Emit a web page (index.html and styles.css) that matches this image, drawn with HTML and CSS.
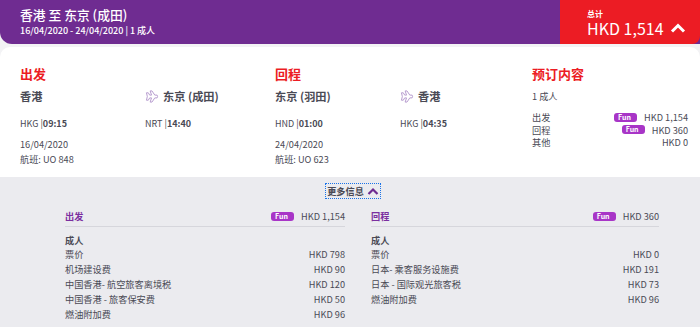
FILE: index.html
```html
<!DOCTYPE html>
<html lang="zh-CN">
  <head>
    <meta charset="UTF-8" />
    <meta name="viewport" content="width=device-width, initial-scale=1.0" />
    <title>预订内容</title>
    <link rel="stylesheet" href="styles.css">
  </head>

  <body>
    <div class="trip-header">
      <div class="trip-title">
        <h1>香港 至 东京 (成田)</h1>
        <div class="trip-dates">16/04/2020 - 24/04/2020 | 1 成人</div>
      </div>
      <div class="trip-total">
        <div class="total-label">总计</div>
        <div class="total-amount">
          HKD 1,514
          <svg class="chevron" width="16" height="12" viewBox="0 0 16 12">
            <path d="M2 9.5 L8 3.5 L14 9.5" fill="none" stroke="#fff" stroke-width="3" />
          </svg>
        </div>
      </div>
    </div>

    <div class="summary-card">
      <div class="leg">
        <h2>出发</h2>
        <div class="leg-grid">
          <div class="city">香港</div>
          <div class="city">
            <svg class="plane" width="14" height="13" viewBox="0 0 15 14">
              <path d="M1.5 3 L3.5 3 L5 5.5 L7 5.5 L5.5 1 L7.5 1 L10.5 5.5 L13 5.5 Q14 7 13 8.5 L10.5 8.5 L7.5 13 L5.5 13 L7 8.5 L5 8.5 L3.5 11 L1.5 11 L2.5 7 Z" fill="none" stroke="#b296cc" stroke-width="1" stroke-linejoin="round" />
            </svg>
            东京 (成田)
          </div>
          <div class="time">HKG |<b>09:15</b></div>
          <div class="time">NRT |<b>14:40</b></div>
        </div>
        <div class="flight-info">16/04/2020<br>航班: UO 848</div>
      </div>

      <div class="leg">
        <h2>回程</h2>
        <div class="leg-grid">
          <div class="city">东京 (羽田)</div>
          <div class="city">
            <svg class="plane" width="14" height="13" viewBox="0 0 15 14">
              <path d="M1.5 3 L3.5 3 L5 5.5 L7 5.5 L5.5 1 L7.5 1 L10.5 5.5 L13 5.5 Q14 7 13 8.5 L10.5 8.5 L7.5 13 L5.5 13 L7 8.5 L5 8.5 L3.5 11 L1.5 11 L2.5 7 Z" fill="none" stroke="#b296cc" stroke-width="1" stroke-linejoin="round" />
            </svg>
            香港
          </div>
          <div class="time">HND |<b>01:00</b></div>
          <div class="time">HKG |<b>04:35</b></div>
        </div>
        <div class="flight-info">24/04/2020<br>航班: UO 623</div>
      </div>

      <div class="booking">
        <h2>预订内容</h2>
        <div class="pax">1 成人</div>
        <div class="booking-rows">
          <div class="booking-row">
            <span>出发</span>
            <span class="price"><span class="fun">Fun</span>HKD 1,154</span>
          </div>
          <div class="booking-row">
            <span>回程</span>
            <span class="price"><span class="fun">Fun</span>HKD 360</span>
          </div>
          <div class="booking-row">
            <span>其他</span>
            <span class="price">HKD 0</span>
          </div>
        </div>
      </div>
    </div>

    <div class="details">
      <div class="more-toggle">
        <span class="more-link">更多信息
          <svg width="12" height="9" viewBox="0 0 12 9">
            <path d="M1.5 7 L6 2.5 L10.5 7" fill="none" stroke="#6f2c91" stroke-width="2.2" />
          </svg>
        </span>
      </div>

      <div class="breakdown">
        <div class="panel">
          <div class="panel-head">
            <span>出发</span>
            <span class="price"><span class="fun">Fun</span>HKD 1,154</span>
          </div>
          <div class="panel-sub">成人</div>
          <div class="fee"><span>票价</span><span>HKD 798</span></div>
          <div class="fee"><span>机场建设费</span><span>HKD 90</span></div>
          <div class="fee"><span>中国香港- 航空旅客离境税</span><span>HKD 120</span></div>
          <div class="fee"><span>中国香港 - 旅客保安费</span><span>HKD 50</span></div>
          <div class="fee"><span>燃油附加费</span><span>HKD 96</span></div>
        </div>

        <div class="panel">
          <div class="panel-head">
            <span>回程</span>
            <span class="price"><span class="fun">Fun</span>HKD 360</span>
          </div>
          <div class="panel-sub">成人</div>
          <div class="fee"><span>票价</span><span>HKD 0</span></div>
          <div class="fee"><span>日本- 乘客服务设施费</span><span>HKD 191</span></div>
          <div class="fee"><span>日本 - 国际观光旅客税</span><span>HKD 73</span></div>
          <div class="fee"><span>燃油附加费</span><span>HKD 96</span></div>
        </div>
      </div>
    </div>
  </body>
</html>
```

FILE: styles.css
```css
body {
  margin: 0;
  padding: 0;
  font-family: "Noto Sans CJK SC", "Noto Sans", sans-serif;
  color: #4a4a55;
  background: #f3f3f5;
  width: 700px;
  height: 327px;
  overflow: hidden;
}

.trip-header {
  display: flex;
  height: 44px;
  background: #6f2c91;
  border-bottom-left-radius: 12px;
  color: #fff;
}

.trip-title {
  flex: 1;
  padding: 6px 0 0 20px;
}

.trip-title h1 {
  margin: 0;
  font-size: 12.8px;
  font-weight: 500;
  line-height: 17px;
}

.trip-dates {
  font-size: 9px;
  font-weight: 500;
  line-height: 15px;
}

.trip-total {
  width: 113px;
  background: #ec1c24;
  border-bottom-right-radius: 8px;
  padding: 9px 0 0 27px;
}

.total-label {
  font-size: 8px;
  font-weight: 700;
  line-height: 10px;
}

.total-amount {
  display: flex;
  align-items: center;
  gap: 6px;
  font-size: 16px;
  line-height: 18px;
}

.summary-card {
  display: grid;
  grid-template-columns: 255px 257px 1fr;
  margin-top: 3px;
  height: 130px;
  box-sizing: border-box;
  padding: 18px 12px 0 20px;
  background: #fff;
  border-radius: 10px 10px 0 0;
}

.summary-card h2 {
  margin: 0;
  font-size: 13px;
  font-weight: 700;
  line-height: 18px;
  color: #ec1c24;
}

.leg-grid {
  display: grid;
  grid-template-columns: 125px 1fr;
  row-gap: 12px;
  margin-top: 4px;
}

.city {
  display: flex;
  align-items: center;
  gap: 4px;
  font-size: 11.2px;
  font-weight: 700;
  line-height: 18px;
  color: #4a4a55;
}

.time {
  font-size: 9px;
  line-height: 13px;
}

.time b {
  font-weight: 700;
}

.flight-info {
  margin-top: 7px;
  font-size: 9.2px;
  line-height: 15px;
}

.pax {
  margin-top: 5px;
  font-size: 9.2px;
  line-height: 16px;
}

.booking-rows {
  margin-top: 7px;
}

.booking-row {
  display: flex;
  justify-content: space-between;
  font-size: 9.2px;
  line-height: 12.5px;
}

.price {
  display: flex;
  align-items: center;
  gap: 7px;
}

.fun {
  display: inline-block;
  width: 19px;
  height: 9px;
  padding-left: 4px;
  background: #a835c7;
  border-radius: 3px;
  color: #fff;
  font-size: 7px;
  font-weight: 700;
  line-height: 9px;
}

.details {
  background: #ebebef;
  height: 150px;
}

.more-toggle {
  display: flex;
  justify-content: center;
  padding: 7px 0 0 6px;
}

.more-link {
  display: inline-flex;
  align-items: center;
  gap: 3px;
  padding: 0 1px;
  font-size: 9.2px;
  font-weight: 700;
  line-height: 14px;
  color: #4a4a55;
  outline: 1px dotted #1a73e8;
}

.breakdown {
  display: grid;
  grid-template-columns: 280px 288px;
  column-gap: 26px;
  padding: 12px 0 0 65px;
}

.panel-head {
  display: flex;
  justify-content: space-between;
  padding-bottom: 3px;
  border-bottom: 1px solid #d6d6dc;
  font-size: 9.2px;
  line-height: 13px;
}

.panel-head > span:first-child {
  color: #7b2fa0;
  font-weight: 700;
}

.panel-sub {
  margin-top: 6px;
  font-size: 9.2px;
  font-weight: 700;
  line-height: 14px;
}

.fee {
  display: flex;
  justify-content: space-between;
  font-size: 9.2px;
  line-height: 15px;
}
```
